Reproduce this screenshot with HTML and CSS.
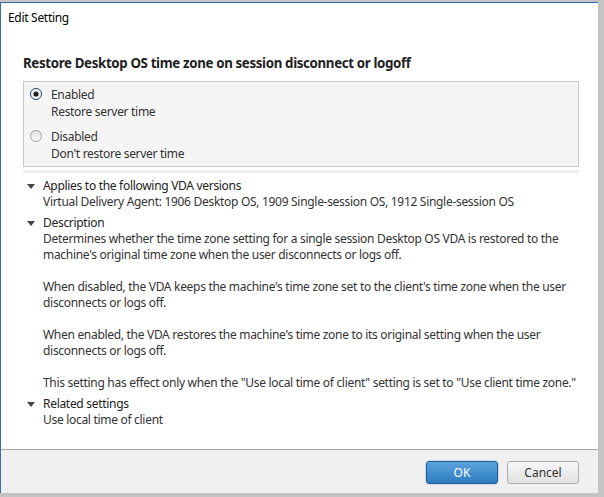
FILE: index.html
```html
<!DOCTYPE html>
<html lang="en">
<head>
  <meta charset="UTF-8">
  <title>Edit Setting</title>
  <link rel="stylesheet" href="styles.css">
</head>
<body>
<div class="screen">
  <div class="dialog">
    <div class="titlebar">Edit Setting</div>

    <div class="content">
      <h1>Restore Desktop OS time zone on session disconnect or logoff</h1>

      <div class="options">
        <div class="option">
          <svg class="radio" width="14" height="14" viewBox="0 0 14 14">
            <circle cx="7" cy="7" r="6.5" fill="#dbe9f6"/>
            <circle cx="7" cy="7" r="5.5" fill="#f4f8fc" stroke="#33475c" stroke-width="1"/>
            <circle cx="7" cy="7" r="2.6" fill="#222"/>
          </svg>
          <div>
            <div class="opt-title">Enabled</div>
            <div class="opt-sub">Restore server time</div>
          </div>
        </div>
        <div class="option">
          <svg class="radio" width="14" height="14" viewBox="0 0 14 14">
            <defs>
              <linearGradient id="off" x1="0" y1="0" x2="0" y2="1">
                <stop offset="0" stop-color="#e2e2e2"/>
                <stop offset="1" stop-color="#fbfbfb"/>
              </linearGradient>
            </defs>
            <circle cx="7" cy="7" r="5.5" fill="url(#off)" stroke="#a3a3a3" stroke-width="1"/>
          </svg>
          <div>
            <div class="opt-title">Disabled</div>
            <div class="opt-sub">Don't restore server time</div>
          </div>
        </div>
      </div>
      <div class="divider"></div>

      <div class="section">
        <div class="section-head"><span class="tri"></span>Applies to the following VDA versions</div>
        <div class="section-body">
          <p>Virtual Delivery Agent: 1906 Desktop OS, 1909 Single-session OS, 1912 Single-session OS</p>
        </div>
      </div>

      <div class="section">
        <div class="section-head"><span class="tri"></span>Description</div>
        <div class="section-body">
          <p>Determines whether the time zone setting for a single session Desktop OS VDA is restored to the<br>machine's original time zone when the user disconnects or logs off.</p>
          <p>When disabled, the VDA keeps the machine's time zone set to the client's time zone when the user<br>disconnects or logs off.</p>
          <p>When enabled, the VDA restores the machine's time zone to its original setting when the user<br>disconnects or logs off.</p>
          <p>This setting has effect only when the "Use local time of client" setting is set to "Use client time zone."</p>
        </div>
      </div>

      <div class="section">
        <div class="section-head"><span class="tri"></span>Related settings</div>
        <div class="section-body">
          <p>Use local time of client</p>
        </div>
      </div>
    </div>

    <div class="footer">
      <button class="btn btn-ok">OK</button>
      <button class="btn btn-cancel">Cancel</button>
    </div>
  </div>
</div>
</body>
</html>
```

FILE: styles.css
```css
html, body {
  margin: 0;
  padding: 0;
}
body {
  font-family: "Noto Sans", "Open Sans", sans-serif;
  font-size: 12px;
  letter-spacing: -0.3px;
  color: #333;
  background: #c4c4c4;
}
.screen {
  width: 604px;
  height: 497px;
  padding-top: 2px;
  box-sizing: border-box;
  background: #c4c4c4;
}
.dialog {
  width: 598px;
  height: 491px;
  box-sizing: border-box;
  border-top: 1px solid #3a6ea6;
  border-left: 1px solid #3a6ea6;
  background: #fff;
  display: flex;
  flex-direction: column;
}
.titlebar {
  height: 30px;
  line-height: 30px;
  padding-left: 7px;
  color: #000;
}
.content {
  flex: 1;
  padding: 21px 19px 0 22px;
}
h1 {
  margin: 0;
  font-size: 13.3px;
  letter-spacing: -0.35px;
  font-weight: bold;
  line-height: 18px;
  color: #222;
}
.options {
  margin-top: 9px;
  background: #f5f5f5;
  border: 1px solid #c9c9c9;
  padding: 4px 8px 4px 5px;
  display: flex;
  flex-direction: column;
  gap: 8px;
}
.option {
  display: flex;
  gap: 8px;
  line-height: 17px;
}
.radio {
  margin-top: 1px;
  flex: none;
}
.divider {
  margin-top: 3px;
  height: 3px;
  background: #efefef;
}
.section {
  margin-top: 5px;
  line-height: 16px;
}
.section:first-of-type {
  margin-top: 4px;
}
.section-head {
  display: flex;
  align-items: center;
  color: #222;
  padding-left: 4px;
}
.tri {
  width: 0;
  height: 0;
  border-left: 4px solid transparent;
  border-right: 4px solid transparent;
  border-top: 5px solid #444;
  margin-right: 8px;
}
.section-body {
  padding-left: 20px;
}
.section-body p {
  margin: 0 0 16px;
  white-space: nowrap;
}
.section-body p:last-child {
  margin-bottom: 0;
}
.footer {
  height: 44px;
  border-top: 1px solid #a6a6a6;
  background: #f0f0f0;
  display: flex;
  justify-content: flex-end;
  align-items: flex-start;
  gap: 9px;
  padding: 11px 19px 0 0;
  box-sizing: border-box;
}
.btn {
  width: 72px;
  height: 23px;
  font-family: inherit;
  font-size: 12px;
  border-radius: 3px;
  padding: 0;
}
.btn-ok {
  color: #fff;
  background: linear-gradient(#5aa3dc, #2e7cc0);
  border: 1px solid #1f5a96;
  box-shadow: 0 0 2px #7fb2e0;
}
.btn-cancel {
  color: #333;
  background: linear-gradient(#f7f7f7, #e1e1e1);
  border: 1px solid #acacac;
}
```
